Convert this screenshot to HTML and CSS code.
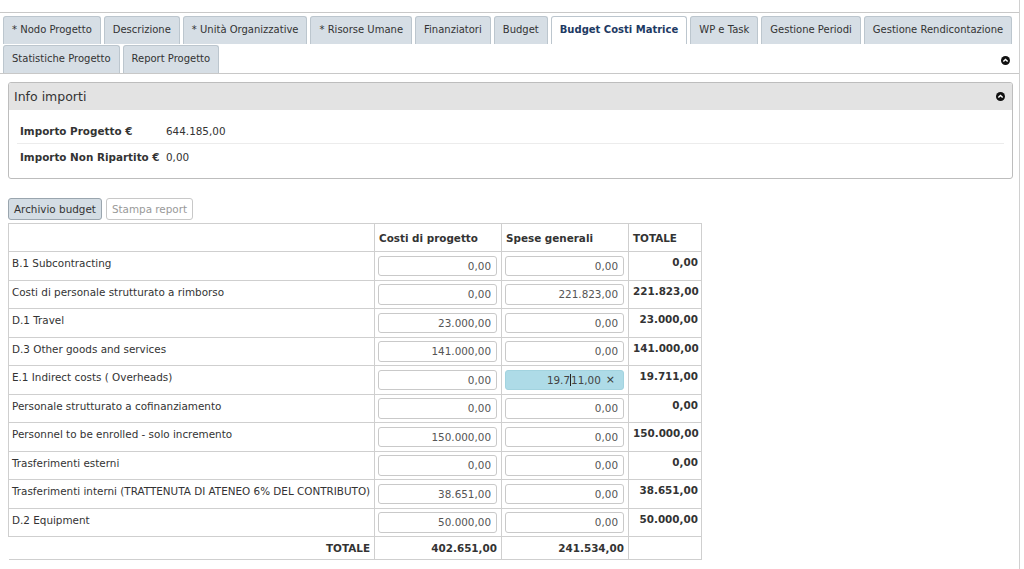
FILE: index.html
```html
<!DOCTYPE html>
<html lang="it">
<head>
<meta charset="utf-8">
<title>Budget Costi Matrice</title>
<link rel="stylesheet" href="styles.css">
</head>
<body>
<div class="page">
  <div class="tabs">
    <div class="tab">* Nodo Progetto</div>
    <div class="tab">Descrizione</div>
    <div class="tab">* Unità Organizzative</div>
    <div class="tab">* Risorse Umane</div>
    <div class="tab">Finanziatori</div>
    <div class="tab">Budget</div>
    <div class="tab active">Budget Costi Matrice</div>
    <div class="tab">WP e Task</div>
    <div class="tab">Gestione Periodi</div>
    <div class="tab">Gestione Rendicontazione</div>
    <div class="tab">Statistiche Progetto</div>
    <div class="tab">Report Progetto</div>
    <div class="tabs-toggle"><svg class="chev" viewBox="0 0 10 10" width="9" height="9"><circle cx="5" cy="5" r="5" fill="#111"/><path d="M2.6 6.2 L5 3.8 L7.4 6.2" fill="none" stroke="#fff" stroke-width="1.6"/></svg></div>
  </div>

  <div class="panel">
    <div class="panel-head">
      <span class="panel-title">Info importi</span>
      <svg class="chev" viewBox="0 0 10 10" width="9" height="9"><circle cx="5" cy="5" r="5" fill="#111"/><path d="M2.6 6.2 L5 3.8 L7.4 6.2" fill="none" stroke="#fff" stroke-width="1.6"/></svg>
    </div>
    <div class="panel-body">
      <div class="info-row"><span class="info-label">Importo Progetto €</span><span>644.185,00</span></div>
      <div class="info-row"><span class="info-label">Importo Non Ripartito €</span><span>0,00</span></div>
    </div>
  </div>

  <div class="actions">
    <button class="btn primary">Archivio budget</button>
    <button class="btn disabled">Stampa report</button>
  </div>

  <table class="matrix">
    <colgroup><col class="c-label"><col class="c-val"><col class="c-val"><col class="c-tot"></colgroup>
    <thead>
      <tr><th></th><th>Costi di progetto</th><th>Spese generali</th><th>TOTALE</th></tr>
    </thead>
    <tbody>
      <tr><td class="lbl">B.1 Subcontracting</td><td><input class="num" value="0,00"></td><td><input class="num" value="0,00"></td><td class="tot">0,00</td></tr>
      <tr><td class="lbl">Costi di personale strutturato a rimborso</td><td><input class="num" value="0,00"></td><td><input class="num" value="221.823,00"></td><td class="tot">221.823,00</td></tr>
      <tr><td class="lbl">D.1 Travel</td><td><input class="num" value="23.000,00"></td><td><input class="num" value="0,00"></td><td class="tot">23.000,00</td></tr>
      <tr><td class="lbl">D.3 Other goods and services</td><td><input class="num" value="141.000,00"></td><td><input class="num" value="0,00"></td><td class="tot">141.000,00</td></tr>
      <tr><td class="lbl">E.1 Indirect costs ( Overheads)</td><td><input class="num" value="0,00"></td><td><div class="num focus">19.7<span class="caret"></span>11,00<span class="clear">×</span></div></td><td class="tot">19.711,00</td></tr>
      <tr><td class="lbl">Personale strutturato a cofinanziamento</td><td><input class="num" value="0,00"></td><td><input class="num" value="0,00"></td><td class="tot">0,00</td></tr>
      <tr><td class="lbl">Personnel to be enrolled - solo incremento</td><td><input class="num" value="150.000,00"></td><td><input class="num" value="0,00"></td><td class="tot">150.000,00</td></tr>
      <tr><td class="lbl">Trasferimenti esterni</td><td><input class="num" value="0,00"></td><td><input class="num" value="0,00"></td><td class="tot">0,00</td></tr>
      <tr><td class="lbl">Trasferimenti interni (TRATTENUTA DI ATENEO 6% DEL CONTRIBUTO)</td><td><input class="num" value="38.651,00"></td><td><input class="num" value="0,00"></td><td class="tot">38.651,00</td></tr>
      <tr><td class="lbl">D.2 Equipment</td><td><input class="num" value="50.000,00"></td><td><input class="num" value="0,00"></td><td class="tot">50.000,00</td></tr>
    </tbody>
    <tfoot>
      <tr><td class="foot-lbl">TOTALE</td><td class="foot-val">402.651,00</td><td class="foot-val">241.534,00</td><td class="foot-val"></td></tr>
    </tfoot>
  </table>
</div>
</body>
</html>
```

FILE: styles.css
```css
html, body {
  margin: 0;
  padding: 0;
  background: #fff;
}
body {
  font-family: "DejaVu Sans", Verdana, sans-serif;
  font-size: 10.4px;
  color: #333;
}
.page {
  width: 1020px;
  min-height: 569px;
  border-right: 1px solid #d0d0d0;
  padding-top: 12px;
  box-sizing: border-box;
}
.tabs {
  display: flex;
  flex-wrap: wrap;
  column-gap: 3px;
  row-gap: 1px;
  padding: 3px 0 0 3px;
  border-top: 1px solid #c8c8c8;
  border-bottom: 1px solid #c8c8c8;
}
.tab {
  height: 28px;
  box-sizing: border-box;
  padding: 0 8px 2px;
  display: flex;
  align-items: center;
  background: #d6dee5;
  border: 1px solid #bcc6ce;
  border-bottom: none;
  border-radius: 3px 3px 0 0;
  color: #333;
  font-size: 10px;
  white-space: nowrap;
}
.tab.active {
  background: #fff;
  color: #1d3a63;
  font-weight: bold;
}
.tabs-toggle {
  margin-left: auto;
  margin-right: 9px;
  display: flex;
  align-items: center;
  height: 28px;
  padding-top: 2px;
  box-sizing: border-box;
}
.chev { display: block; }

.panel {
  margin: 8px 6px 0 8px;
  border: 1px solid #bdbdbd;
  border-radius: 3px;
}
.panel-head {
  height: 27px;
  background: #e3e3e3;
  display: flex;
  align-items: center;
  justify-content: space-between;
  padding: 0 7px 0 5px;
  border-radius: 2px 2px 0 0;
}
.panel-title {
  font-size: 12.5px;
  color: #333;
}
.panel-body {
  padding: 8px 8px 9px 8px;
}
.info-row {
  display: flex;
  align-items: center;
  height: 25px;
  padding-left: 3px;
}
.info-row + .info-row {
  border-top: 1px solid #ececec;
}
.info-label {
  width: 146px;
  font-weight: bold;
  color: #333;
}

.actions {
  display: flex;
  gap: 4px;
  margin: 19px 0 0 8px;
}
.btn {
  font-family: inherit;
  font-size: 10.4px;
  height: 22px;
  padding: 0 5px;
  border-radius: 3px;
  cursor: default;
}
.btn.primary {
  background: #d4dde4;
  border: 1px solid #9aa5ae;
  color: #333;
}
.btn.disabled {
  background: #fff;
  border: 1px solid #c8c8c8;
  color: #999;
}

.matrix {
  margin: 3px 0 0 8px;
  border-collapse: collapse;
  width: 693px;
  table-layout: fixed;
}
.c-label { width: 366px; }
.c-val { width: 127px; }
.c-tot { width: 73px; }
.matrix th, .matrix td {
  border: 1px solid #cfcfcf;
  padding: 0;
}
.matrix th {
  height: 28px;
  box-sizing: border-box;
  text-align: left;
  font-weight: bold;
  padding: 0 4px;
  vertical-align: middle;
}
.matrix tbody td {
  vertical-align: top;
  padding: 3.5px 4px 3.5px 3px;
}
.matrix td.lbl {
  padding: 5px 4px 0 3px;
  white-space: nowrap;
}
.matrix td.tot {
  text-align: right;
  font-weight: bold;
  padding: 4px 3px 0 4px;
}
.num {
  display: block;
  width: 119px;
  height: 20.5px;
  box-sizing: border-box;
  margin: 0;
  border: 1px solid #c9c9c9;
  border-radius: 3px;
  background: #fff;
  font-family: "DejaVu Sans", Verdana, sans-serif;
  font-size: 10.4px;
  color: #555;
  text-align: right;
  padding: 0 5px 0 4px;
  outline: none;
}
.num.focus {
  display: flex;
  align-items: center;
  justify-content: flex-end;
  background: #aedbe7;
  border-color: #a2d3df;
  color: #444;
  padding-right: 8px;
}
.caret {
  display: inline-block;
  width: 1px;
  height: 12px;
  background: #222;
}
.clear {
  margin-left: 5px;
  font-size: 11px;
  color: #333;
}
.matrix tfoot td {
  height: 22px;
  font-weight: bold;
  text-align: right;
  padding: 0 4px;
  vertical-align: middle;
}
.matrix tfoot td.foot-lbl {
  border-left: none;
  border-bottom: 1px solid #cfcfcf;
}
```
